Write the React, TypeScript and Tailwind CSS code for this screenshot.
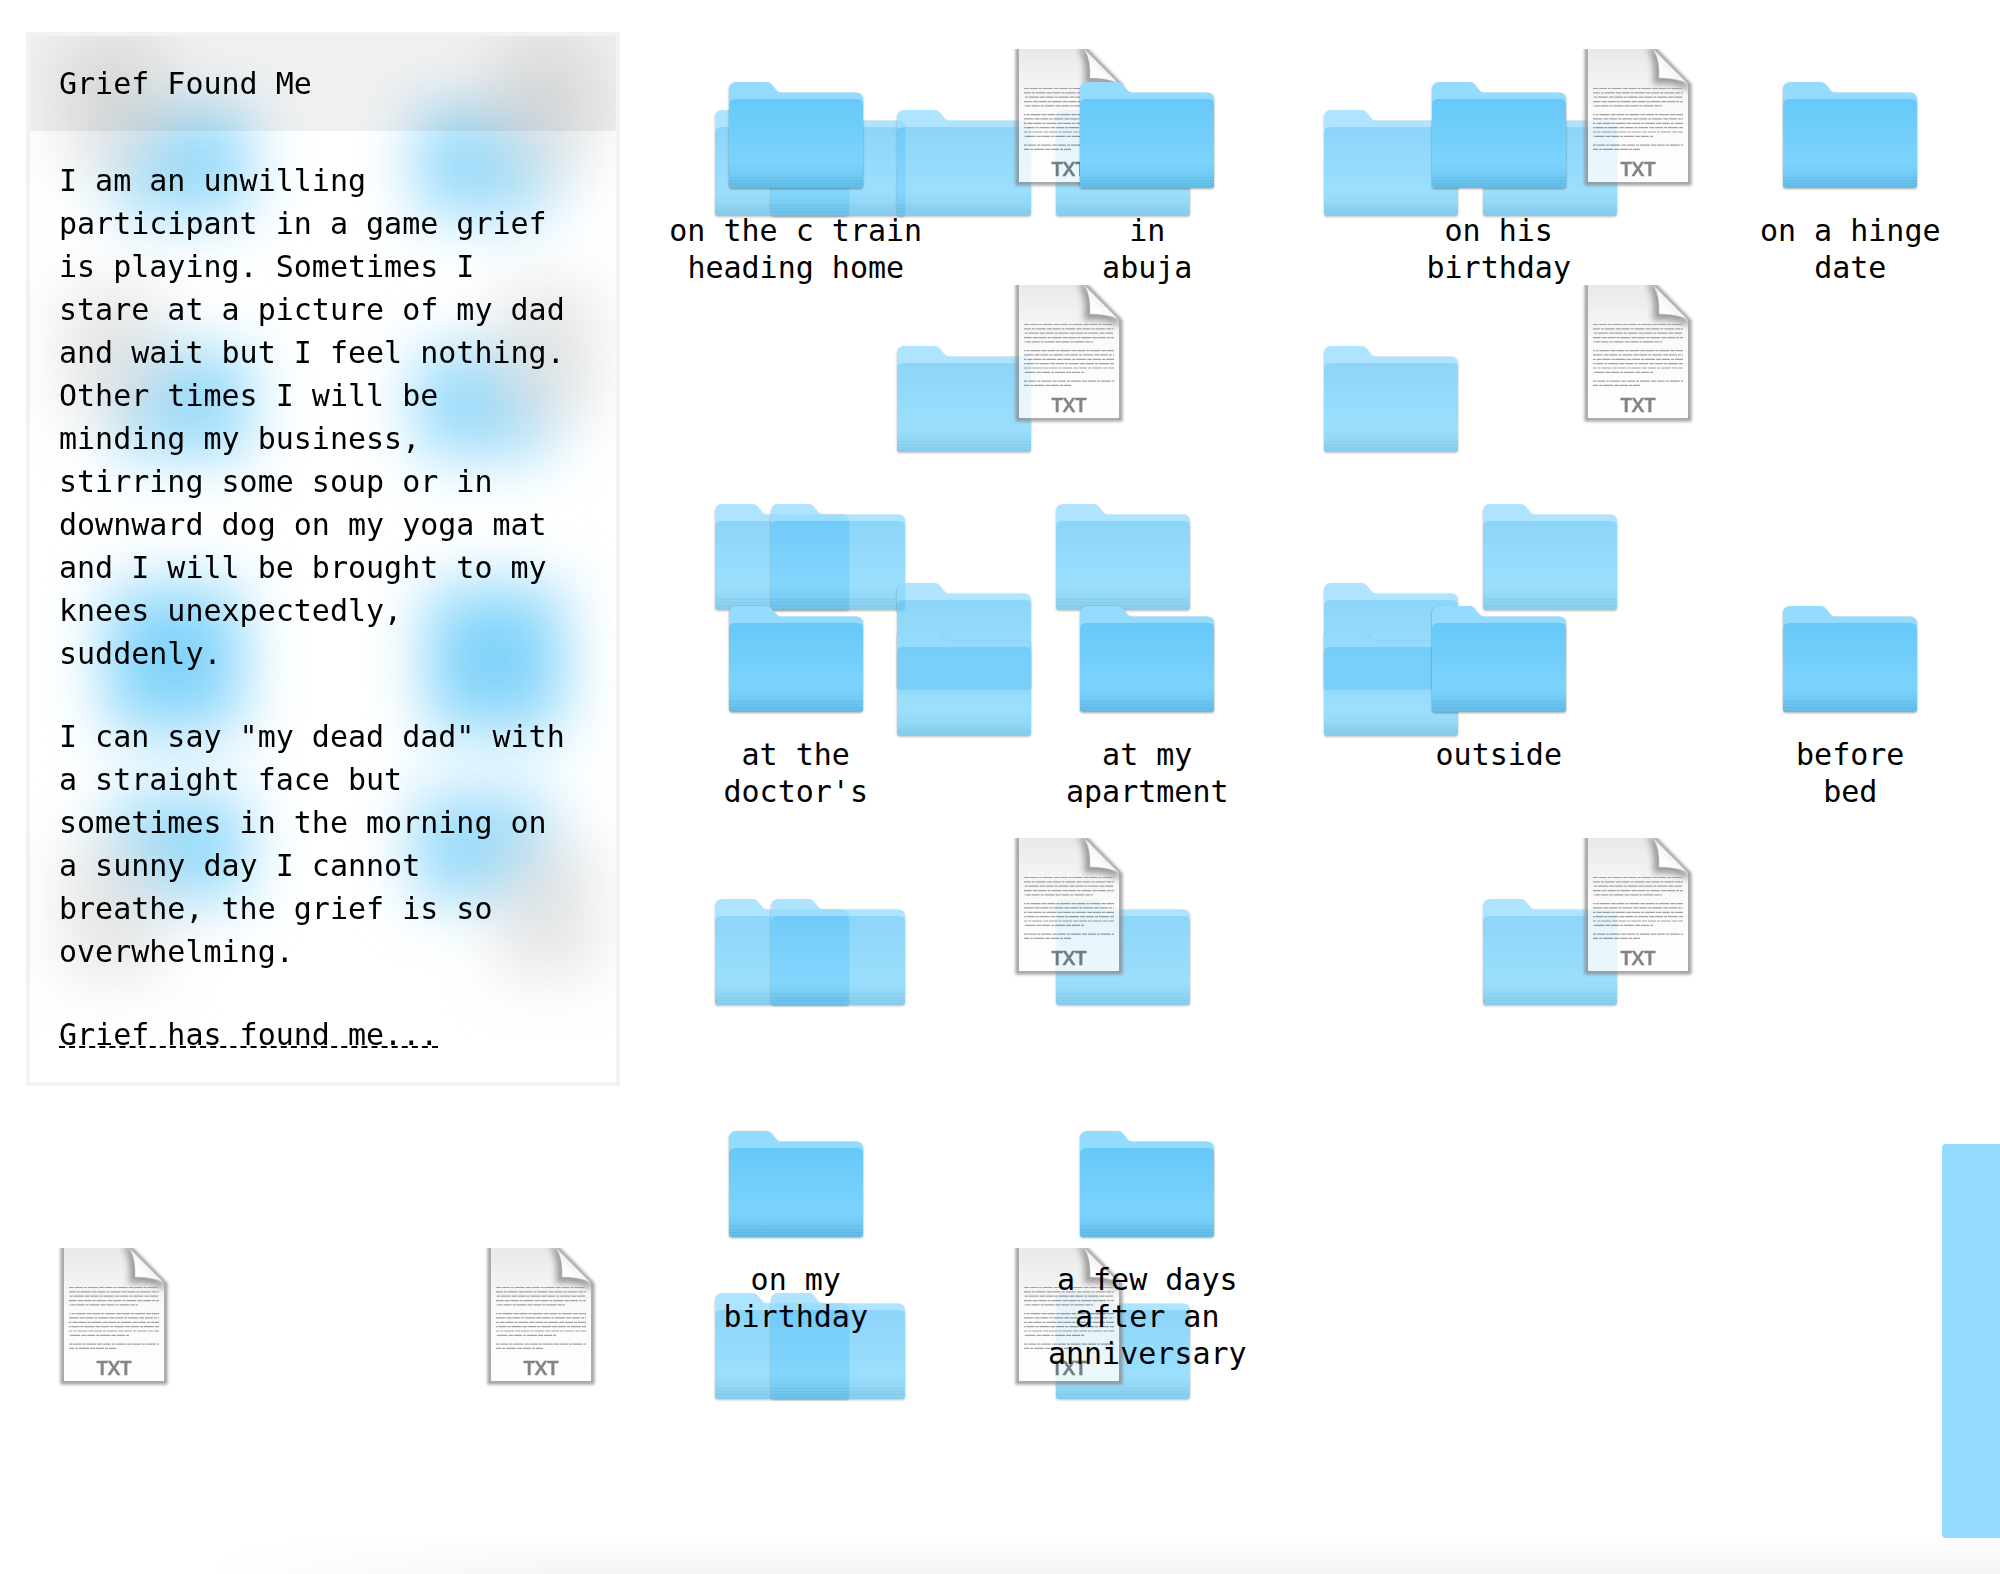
import React from 'react';

interface Point {
  x: number;
  y: number;
}

// Scattered icons that sit behind the labelled folders
const ghostFolders: Point[] = [
  { x: 715, y: 110 },
  { x: 771, y: 110 },
  { x: 897, y: 110 },
  { x: 1056, y: 110 },
  { x: 1324, y: 110 },
  { x: 1483, y: 110 },
  { x: 897, y: 346 },
  { x: 1324, y: 346 },
  { x: 715, y: 504 },
  { x: 771, y: 504 },
  { x: 1056, y: 504 },
  { x: 1483, y: 504 },
  { x: 897, y: 583 },
  { x: 1324, y: 583 },
  { x: 897, y: 630 },
  { x: 1324, y: 630 },
  { x: 715, y: 899 },
  { x: 771, y: 899 },
  { x: 1056, y: 899 },
  { x: 1483, y: 899 },
  { x: 715, y: 1293 },
  { x: 771, y: 1293 },
  { x: 1056, y: 1293 },
];

const textFiles: Point[] = [
  { x: 1018, y: 49 },
  { x: 1587, y: 49 },
  { x: 1018, y: 285 },
  { x: 1587, y: 285 },
  { x: 1018, y: 838 },
  { x: 1587, y: 838 },
  { x: 63, y: 1248 },
  { x: 490, y: 1248 },
  { x: 1018, y: 1248 },
];

// Icons seen only as soft colour through the frosted window
const frostedFolders: Point[] = [
  { x: 115, y: 110 },
  { x: 417, y: 110 },
  { x: 115, y: 350 },
  { x: 417, y: 350 },
  { x: 107, y: 583 },
  { x: 107, y: 630 },
  { x: 428, y: 583 },
  { x: 428, y: 630 },
  { x: 112, y: 794 },
  { x: 414, y: 794 },
];

const frostedFiles: Point[] = [
  { x: 62, y: 40 },
  { x: 496, y: 40 },
  { x: 62, y: 286 },
  { x: 496, y: 286 },
  { x: 62, y: 842 },
  { x: 496, y: 842 },
];

const folders: string[][] = [
  ['on the c train', 'heading home'],
  ['in', 'abuja'],
  ['on his', 'birthday'],
  ['on a hinge', 'date'],
  ['at the', "doctor's"],
  ['at my', 'apartment'],
  ['outside'],
  ['before', 'bed'],
  ['on my', 'birthday'],
  ['a few days', 'after an', 'anniversary'],
];

// Widths of the tiny text lines on the TXT icon, 0 is a blank line
const fileLines = [90, 90, 90, 90, 69, 0, 90, 90, 90, 90, 90, 61, 0, 90, 47];

const FolderIcon: React.FC = () => (
  <svg width="134" height="106" viewBox="0 0 134 106" className="overflow-visible" aria-hidden="true">
    <path
      d="M0 8Q0 0 8 0H37Q41 0 43 3L47 8Q49 10.500 52 10.500H127Q134 10.500 134 18V103Q134 106 131 106H3Q0 106 0 103Z"
      fill="#93dcff"
      className="drop-shadow-[0_1px_1px_rgba(0,0,0,0.35)]"
    />
    <path d="M0 23Q0 17 6 17H128Q134 17 134 23V103Q134 106 131 106H3Q0 106 0 103Z" fill="url(#folder-front)" />
    <path d="M0 95.500H134M0 98.500H134M0 101.500H134" stroke="#4fa9d3" strokeOpacity="0.25" strokeWidth="1" />
  </svg>
);

const TextFileIcon: React.FC = () => (
  <svg width="102" height="134" viewBox="0 0 102 134" className="overflow-visible" aria-hidden="true">
    <g clipPath="url(#file-clip)">
      <path d="M0 -4V134H102V36L66 -1" fill="none" stroke="#8a8a8a" strokeWidth="5" className="blur-[1.5px]" />
    </g>
    <path d="M1 0H67L101 35V133H1Z" fill="url(#file-page)" />
    <g clipPath="url(#file-shape)">
      <path d="M60 -2Q69 12 66 36Q82 32 104 42L101 35L66 -2Z" fill="#808080" className="blur-[3px]" />
    </g>
    <path d="M67 1L100 34Q89 29 72 29Q73 12 67 1Z" fill="url(#file-curl)" stroke="#c4c4c4" strokeWidth="0.500" />
    {fileLines.map((width, index) => (
      <path
        key={index}
        d={`M6 ${39.5 + index * 4.35}h${width}`}
        stroke="#8c8c8c"
        strokeWidth="1.200"
        strokeDasharray="5 0.800 8 1 3 0.900 10 1.100"
        strokeDashoffset={index * 7}
      />
    ))}
    <text x="51" y="127" textAnchor="middle" fontFamily="'Open Sans', sans-serif" fontSize="20" fontWeight="600" fill="#666" stroke="#666" strokeWidth="0.500">
      TXT
    </text>
  </svg>
);

const Gradients: React.FC = () => (
  <svg width="0" height="0" className="absolute" aria-hidden="true">
    <defs>
      <linearGradient id="folder-front" x1="0" y1="0" x2="0" y2="1">
        <stop offset="0" stopColor="#67c8f8" />
        <stop offset="0.720" stopColor="#7bd4fd" />
        <stop offset="0.850" stopColor="#71cbf5" />
        <stop offset="1" stopColor="#5fbbe6" />
      </linearGradient>
      <linearGradient id="file-page" x1="0" y1="0" x2="0" y2="1">
        <stop offset="0" stopColor="#e4e4e4" />
        <stop offset="0.450" stopColor="#fafafa" />
        <stop offset="1" stopColor="#ffffff" />
      </linearGradient>
      <linearGradient id="file-curl" x1="0" y1="1" x2="1" y2="0">
        <stop offset="0.300" stopColor="#ffffff" />
        <stop offset="0.800" stopColor="#dcdcdc" />
      </linearGradient>
      <clipPath id="file-clip">
        <path d="M-8 0H110V144H-8Z" />
      </clipPath>
      <clipPath id="file-shape">
        <path d="M1 0H67L101 35V133H1Z" />
      </clipPath>
    </defs>
  </svg>
);

const Scatter: React.FC = () => (
  <div className="pointer-events-none absolute inset-0 overflow-hidden">
    {ghostFolders.map((item) => (
      <div key={`${item.x}-${item.y}`} className="absolute opacity-75" style={{ left: item.x, top: item.y }}>
        <FolderIcon />
      </div>
    ))}
    {textFiles.map((item) => (
      <div key={`${item.x}-${item.y}`} className="absolute opacity-80" style={{ left: item.x, top: item.y }}>
        <TextFileIcon />
      </div>
    ))}
    <div className="absolute top-[1144px] left-[1942px] h-[394px] w-[400px] rounded bg-[#93dcff]" />
  </div>
);

const FrostedBackdrop: React.FC = () => (
  <div className="pointer-events-none absolute inset-0 overflow-hidden bg-white">
    <div className="absolute -top-9 -left-[30px] blur-[30px]">
      {frostedFolders.map((item) => (
        <div
          key={`${item.x}-${item.y}`}
          className="absolute h-[106px] w-[134px] bg-[#72cdfa] opacity-75"
          style={{ left: item.x, top: item.y }}
        />
      ))}
      {frostedFiles.map((item) => (
        <div
          key={`${item.x}-${item.y}`}
          className="absolute h-[134px] w-[102px] bg-[#e0e0e0] opacity-80"
          style={{ left: item.x, top: item.y }}
        />
      ))}
    </div>
  </div>
);

const StoryWindow: React.FC = () => (
  <article className="relative w-[594px] shrink-0 self-start border-4 border-black/5">
    <FrostedBackdrop />
    <header className="relative bg-black/6 py-[26px] pr-10 pl-[29px]">
      <h1>Grief Found Me</h1>
    </header>
    <div className="relative flex flex-col gap-10 pt-7 pr-10 pb-[26px] pl-[29px]">
      <p>
        I am an unwilling participant in a game grief is playing. Sometimes I stare at a picture of my dad and wait but
        I feel nothing. Other times I will be minding my business, stirring some soup or in downward dog on my yoga mat
        and I will be brought to my knees unexpectedly, suddenly.
      </p>
      <p>
        I can say "my dead dad" with a straight face but sometimes in the morning on a sunny day I cannot breathe, the
        grief is so overwhelming.
      </p>
      <p>
        <a
          href="#found"
          className="underline decoration-dashed decoration-2 underline-offset-1 [text-decoration-skip-ink:none]"
        >
          Grief has found me...
        </a>
      </p>
    </div>
  </article>
);

const App: React.FC = () => {
  return (
    <main className="relative min-h-screen overflow-hidden bg-white font-['DejaVu_Sans_Mono',monospace] text-[30px] leading-[43px] text-black">
      <Gradients />
      <Scatter />
      <div className="absolute right-0 bottom-0 left-[200px] h-10 bg-linear-to-b from-transparent to-black/4 mask-l-from-80%" />
      <div className="relative flex pt-8 pl-[26px]">
        <StoryWindow />
        <nav className="-mr-[26px] grid flex-1 grid-cols-4 grid-rows-[524px_525px_auto] pt-[50px]">
          {folders.map((lines) => (
            <a key={lines.join(' ')} href="#folder" className="flex flex-col items-center gap-6 leading-[37px]">
              <FolderIcon />
              <span className="text-center">
                {lines.map((line) => (
                  <span key={line} className="block">
                    {line}
                  </span>
                ))}
              </span>
            </a>
          ))}
        </nav>
      </div>
    </main>
  );
};

export default App;
